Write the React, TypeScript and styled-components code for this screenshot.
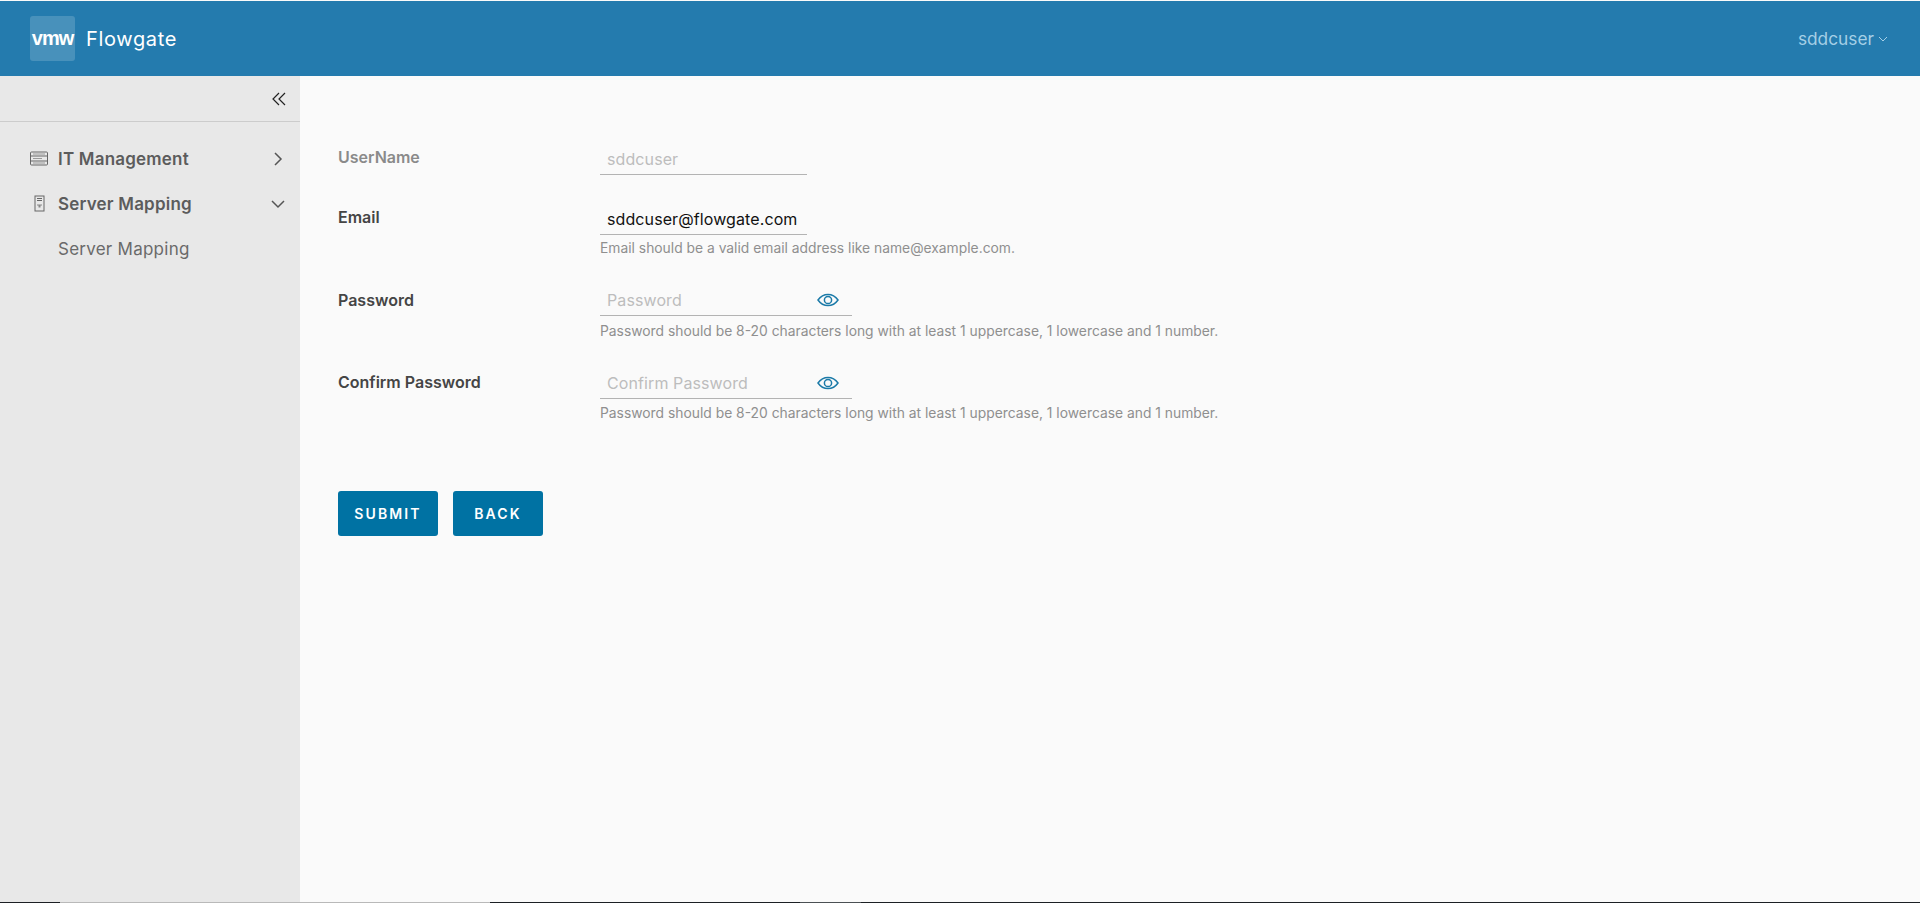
import React from 'react';
import styled, { createGlobalStyle } from 'styled-components';

const GlobalStyle = createGlobalStyle`
    html, body {
        margin: 0;
        padding: 0;
        height: 100%;
        overflow: hidden;
    }
    body {
        font-family: Inter, "Open Sans", "Liberation Sans", sans-serif;
        background: #fafafa;
    }
`;

const Page = styled.div`
    display: flex;
    flex-direction: column;
    height: 903px;
`;

const Header = styled.header`
    display: flex;
    align-items: center;
    justify-content: space-between;
    height: 75px;
    margin-top: 1px;
    padding: 0 32px 0 30px;
    flex: none;
    background: #247bae;
`;

const Brand = styled.div`
    display: flex;
    align-items: center;
    gap: 11px;
    color: #fff;
    font-size: 20px;
    letter-spacing: 0.65px;
`;

const LogoBox = styled.div`
    display: flex;
    align-items: center;
    justify-content: center;
    width: 45px;
    height: 45px;
    border-radius: 3px;
    background: rgba(255, 255, 255, 0.17);
    color: #fff;
    font-family: "Liberation Sans", sans-serif;
    font-size: 20px;
    font-weight: 700;
    letter-spacing: -1px;
`;

const UserMenu = styled.div`
    display: flex;
    align-items: center;
    gap: 4px;
    color: #a5cfe6;
    font-size: 17.300px;
`;

const Body = styled.div`
    display: flex;
    flex: 1;
    min-height: 0;
`;

const Sidebar = styled.aside`
    width: 300px;
    flex: none;
    background: #e8e8e8;
`;

const CollapseBar = styled.div`
    display: flex;
    align-items: center;
    justify-content: flex-end;
    height: 45px;
    padding-right: 13px;
    border-bottom: 1px solid #ccc;
    color: #222;
`;

const NavList = styled.nav`
    display: flex;
    flex-direction: column;
    padding-top: 14px;
`;

const NavRow = styled.div`
    display: flex;
    align-items: center;
    height: 45px;
    padding: 0 15px 0 30px;
    color: #5c5c5c;
    font-size: 17px;
    font-weight: 600;
    letter-spacing: 0.2px;
`;

const NavIcon = styled.span`
    display: flex;
    justify-content: center;
    width: 18px;
    margin-right: 10px;
    color: #666;
`;

const NavLabel = styled.span`
    flex: 1;
`;

const NavChild = styled.div`
    display: flex;
    align-items: center;
    height: 45px;
    padding-left: 58px;
    color: #6a6a6a;
    font-size: 17px;
    letter-spacing: 0.25px;
`;

const Main = styled.main`
    flex: 1;
    padding: 68px 38px 0;
    background: #fafafa;
`;

const Field = styled.div<{ $height: number }>`
    display: grid;
    grid-template-columns: 262px 1fr;
    height: ${p => p.$height}px;
`;

const Label = styled.label<{ $muted?: boolean; $top: number }>`
    padding-top: ${p => p.$top}px;
    color: ${p => (p.$muted ? '#8a8a8a' : '#454545')};
    font-size: 16px;
    font-weight: 600;
`;

const InputLine = styled.div<{ $width: number }>`
    display: flex;
    align-items: center;
    justify-content: space-between;
    width: ${p => p.$width}px;
    height: 31px;
    padding: 0 13px 0 7px;
    box-sizing: border-box;
    border-bottom: 1px solid #b3b3b3;
`;

const Value = styled.span<{ $tone: 'value' | 'hint' }>`
    color: ${p => (p.$tone === 'value' ? '#111' : '#bdbdbd')};
    font-size: 16px;
    letter-spacing: 0.1px;
`;

const HelpText = styled.div<{ $gap: number }>`
    margin-top: ${p => p.$gap}px;
    color: #8f8f8f;
    font-size: 13.850px;
`;

const Actions = styled.div`
    display: flex;
    gap: 15px;
    margin-top: 40px;
`;

const Button = styled.button<{ $width: number }>`
    width: ${p => p.$width}px;
    height: 45px;
    padding: 0;
    border: 0;
    border-radius: 3px;
    background: #0072a3;
    color: #fff;
    font-family: inherit;
    font-size: 14px;
    font-weight: 600;
    letter-spacing: 2.100px;
`;

const BottomStrip = styled.div`
    display: flex;
    flex: none;
    height: 1px;
    background: #1c2024;
`;

const StripPart = styled.span<{ $width: number; $color: string }>`
    width: ${p => p.$width}px;
    background: ${p => p.$color};
`;

const EyeIcon = () => (
    <svg width="22" height="14" viewBox="0 0 22 14" fill="none" stroke="#1b7aa8" strokeWidth="1.500">
        <path d="M1 7c2.500-3.600 6-5.600 10-5.600S18.500 3.400 21 7c-2.500 3.600-6 5.600-10 5.600S3.500 10.600 1 7z" />
        <circle cx="11" cy="7" r="3.600" />
    </svg>
);

const Chevron = ({ dir }: { dir: 'right' | 'down' }) => (
    <svg width="14" height="14" viewBox="0 0 14 14" fill="none" stroke="#555" strokeWidth="1.500">
        <path d={dir === 'right' ? 'M4 1l6 6-6 6' : 'M1 4l6 6 6-6'} />
    </svg>
);

const RackIcon = () => (
    <svg width="18" height="15" viewBox="0 0 18 15" fill="none" stroke="#666" strokeWidth="1">
        <rect x="0.500" y="1" width="17" height="13" rx="1" />
        <path d="M1 5h16M1 10h16" />
        <path d="M3 3h12M3 7.500h9M3 12h12" strokeWidth="1.200" stroke="#999" />
    </svg>
);

const ServerIcon = () => (
    <svg width="11" height="17" viewBox="0 0 11 16" fill="none" stroke="#666" strokeWidth="1">
        <rect x="1" y="0.500" width="9" height="15" />
        <path d="M3 3h5M3 5h5" />
        <path d="M3 9h5v1H6.500v2h-2v-2H3z" fill="#888" stroke="none" />
    </svg>
);

export default function App() {
    return (
        <Page>
            <GlobalStyle />
            <Header>
                <Brand>
                    <LogoBox>vmw</LogoBox>
                    Flowgate
                </Brand>
                <UserMenu>
                    sddcuser
                    <svg width="10" height="10" viewBox="0 0 10 10" fill="none" stroke="#a5cfe6" strokeWidth="1">
                        <path d="M1 3l4 4 4-4" />
                    </svg>
                </UserMenu>
            </Header>
            <Body>
                <Sidebar>
                    <CollapseBar>
                        <svg width="16" height="14" viewBox="0 0 16 14" fill="none" stroke="#222" strokeWidth="1.200">
                            <path d="M8 1L2 7l6 6M14 1L8 7l6 6" />
                        </svg>
                    </CollapseBar>
                    <NavList>
                        <NavRow>
                            <NavIcon><RackIcon /></NavIcon>
                            <NavLabel>IT Management</NavLabel>
                            <Chevron dir="right" />
                        </NavRow>
                        <NavRow>
                            <NavIcon><ServerIcon /></NavIcon>
                            <NavLabel>Server Mapping</NavLabel>
                            <Chevron dir="down" />
                        </NavRow>
                        <NavChild>Server Mapping</NavChild>
                    </NavList>
                </Sidebar>
                <Main>
                    <Field $height={60}>
                        <Label $muted $top={3}>UserName</Label>
                        <div>
                            <InputLine $width={207}><Value $tone="hint">sddcuser</Value></InputLine>
                        </div>
                    </Field>
                    <Field $height={81}>
                        <Label $top={3}>Email</Label>
                        <div>
                            <InputLine $width={207}><Value $tone="value">sddcuser@flowgate.com</Value></InputLine>
                            <HelpText $gap={5}>Email should be a valid email address like name@example.com.</HelpText>
                        </div>
                    </Field>
                    <Field $height={83}>
                        <Label $top={5}>Password</Label>
                        <div>
                            <InputLine $width={252}><Value $tone="hint">Password</Value><EyeIcon /></InputLine>
                            <HelpText $gap={7}>Password should be 8-20 characters long with at least 1 uppercase, 1 lowercase and 1 number.</HelpText>
                        </div>
                    </Field>
                    <Field $height={83}>
                        <Label $top={4}>Confirm Password</Label>
                        <div>
                            <InputLine $width={252}><Value $tone="hint">Confirm Password</Value><EyeIcon /></InputLine>
                            <HelpText $gap={6}>Password should be 8-20 characters long with at least 1 uppercase, 1 lowercase and 1 number.</HelpText>
                        </div>
                    </Field>
                    <Actions>
                        <Button $width={100}>SUBMIT</Button>
                        <Button $width={90}>BACK</Button>
                    </Actions>
                </Main>
            </Body>
            <BottomStrip>
                <StripPart $width={60} $color="#1c2024" />
                <StripPart $width={430} $color="#b9b9b9" />
                <StripPart $width={310} $color="#1c2024" />
                <StripPart $width={61} $color="#4b5054" />
            </BottomStrip>
        </Page>
    );
}
